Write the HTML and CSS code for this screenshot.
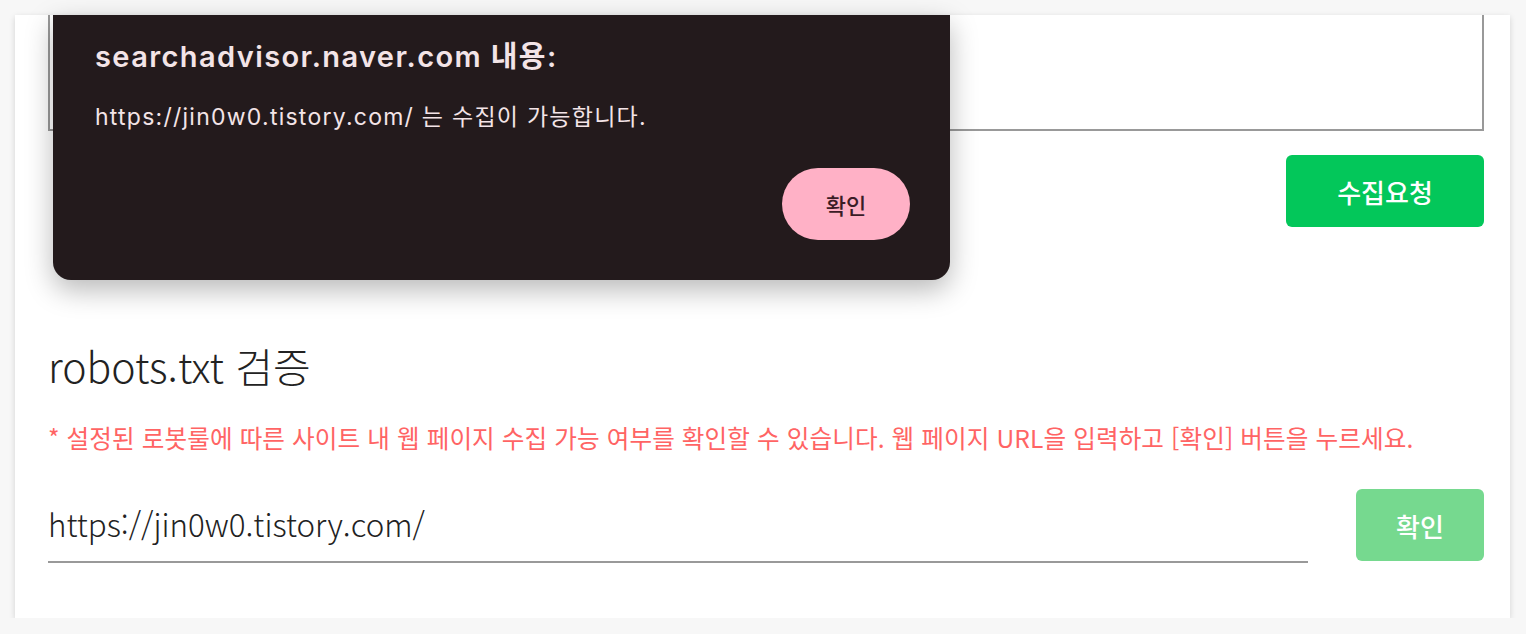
FILE: index.html
```html
<!DOCTYPE html>
<html lang="ko">
<head>
    <meta charset="utf-8">
    <title>robots.txt 검증</title>
    <link rel="stylesheet" href="styles.css">
</head>
<body>
    <div class="card">
        <div class="memo"></div>

        <div class="row-right">
            <button class="btn btn-green">수집요청</button>
        </div>

        <h2 class="section-title">robots.txt 검증</h2>
        <p class="notice">* 설정된 로봇룰에 따른 사이트 내 웹 페이지 수집 가능 여부를 확인할 수 있습니다. 웹 페이지 URL을 입력하고 [확인] 버튼을 누르세요.</p>

        <div class="url-row">
            <div class="url-input">https://jin0w0.tistory.com/</div>
            <button class="btn btn-light">확인</button>
        </div>
    </div>

    <!-- 브라우저 alert 창 -->
    <div class="alert">
        <div class="alert-title">searchadvisor.naver.com 내용:</div>
        <div class="alert-msg">https://jin0w0.tistory.com/ 는 수집이 가능합니다.</div>
        <div class="alert-actions">
            <button class="alert-btn">확인</button>
        </div>
    </div>
</body>
</html>
```

FILE: styles.css
```css
body {
    margin: 0;
    background-color: #f7f7f7;
    font-family: "Noto Sans CJK KR", "Noto Sans", sans-serif;
    color: #222;
}

.card {
    margin: 15px 16px 0 15px;
    height: 603px;
    box-sizing: border-box;
    background-color: #fff;
    padding: 0 26px 0 33px;
    box-shadow: 0 2px 6px rgba(0, 0, 0, 0.15);
}

.memo {
    height: 116px;
    box-sizing: border-box;
    border: 2px solid #999;
    border-top: none;
}

.row-right {
    display: flex;
    justify-content: flex-end;
    margin-top: 24px;
}

.btn {
    height: 72px;
    border: none;
    border-radius: 6px;
    color: #fff;
    font-family: "Noto Sans CJK KR", sans-serif;
    font-size: 26px;
    font-weight: 500;
    cursor: pointer;
}

.btn-green {
    width: 198px;
    background-color: #03c75a;
}

.btn-light {
    width: 128px;
    background-color: #76d98f;
    flex-shrink: 0;
}

.section-title {
    margin: 110px 0 0 0;
    font-size: 41px;
    line-height: 56px;
    font-weight: 300;
    color: #222;
}

.notice {
    margin: 28px 0 0 0;
    font-size: 24.6px;
    line-height: 32px;
    letter-spacing: 0.1px;
    color: #ff6464;
}

.url-row {
    display: flex;
    align-items: flex-start;
    gap: 48px;
    margin-top: 36px;
}

.url-input {
    flex: 1;
    height: 74px;
    line-height: 70px;
    box-sizing: border-box;
    border-bottom: 2px solid #999;
    font-size: 31.3px;
    font-weight: 300;
    color: #222;
}

/* 알림창 */
.alert {
    position: absolute;
    left: 53px;
    top: 15px;
    width: 897px;
    height: 265px;
    box-sizing: border-box;
    padding: 24px 40px 40px 42px;
    background-color: #231a1c;
    border-radius: 0 0 18px 18px;
    box-shadow: 0 10px 28px rgba(0, 0, 0, 0.28);
    font-family: Inter, "Noto Sans CJK KR", sans-serif;
    color: #f3e4e7;
}

.alert-title {
    font-size: 29px;
    font-weight: 600;
    line-height: 36px;
    letter-spacing: 1.4px;
}

.alert-msg {
    margin-top: 26px;
    font-size: 23px;
    line-height: 32px;
    letter-spacing: 1.25px;
}

.alert-actions {
    display: flex;
    justify-content: flex-end;
    margin-top: 35px;
}

.alert-btn {
    width: 128px;
    height: 72px;
    border: none;
    border-radius: 36px;
    background-color: #ffb1c6;
    color: #3b1c26;
    font-family: "Noto Sans CJK KR", sans-serif;
    font-size: 22px;
    font-weight: 500;
}
```
